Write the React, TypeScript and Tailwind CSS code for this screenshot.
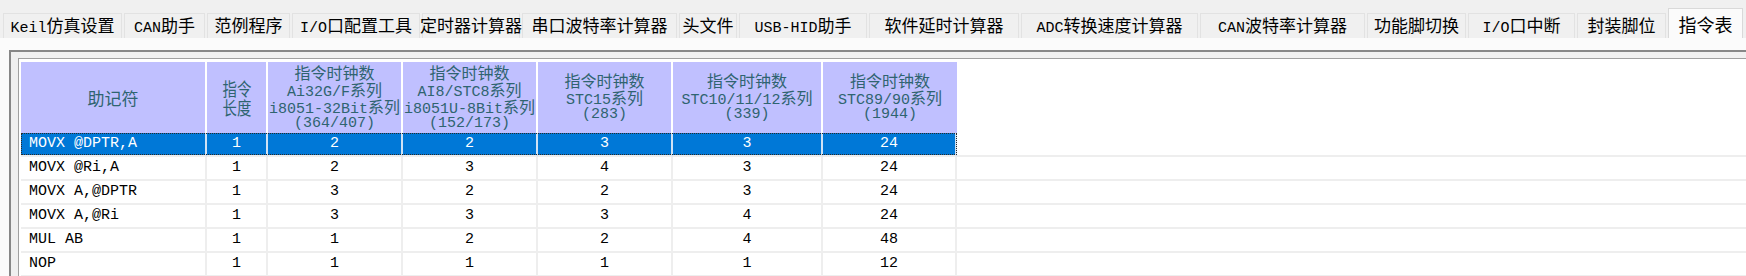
import React from "react";

const CJK = /([\u3000-\u9fff\uff00-\uffef]+)/;

function Mixed({ text, cjk }: { text: string; cjk: string }) {
  return (
    <span>
      {text.split(CJK).map((part, i) =>
        part === "" ? null : CJK.test(part) ? (
          <span key={i} className={cjk}>
            {part}
          </span>
        ) : (
          <span key={i}>{part}</span>
        )
      )}
    </span>
  );
}

// label + width taken from the reference tab strip
const tabs = [
  ["Keil仿真设置", "w-[119px]"],
  ["CAN助手", "w-[81px]"],
  ["范例程序", "w-[83px]"],
  ["I/O口配置工具", "w-[128px]"],
  ["定时器计算器", "w-[98px]"],
  ["串口波特率计算器", "w-[155px]"],
  ["头文件", "w-[58px]"],
  ["USB-HID助手", "w-[128px]"],
  ["软件延时计算器", "w-[150px]"],
  ["ADC转换速度计算器", "w-[177px]"],
  ["CAN波特率计算器", "w-[165px]"],
  ["功能脚切换", "w-[99px]"],
  ["I/O口中断", "w-[107px]"],
  ["封装脚位", "w-[89px]"],
  ["指令表", "w-[75px]"],
];

const colW = ["w-[186px]", "w-[61px]", "w-[135px]", "w-[135px]", "w-[135px]", "w-[150px]", "w-[134px]"];

const clockHeads = [
  ["指令时钟数", "Ai32G/F系列", "(i8051-32Bit系列)", "(364/407)"],
  ["指令时钟数", "AI8/STC8系列", "(i8051U-8Bit系列)", "(152/173)"],
  ["指令时钟数", "STC15系列", "(283)"],
  ["指令时钟数", "STC10/11/12系列", "(339)"],
  ["指令时钟数", "STC89/90系列", "(1944)"],
];

const rows: (string | number)[][] = [
  ["MOVX @DPTR,A", 1, 2, 2, 3, 3, 24],
  ["MOVX @Ri,A", 1, 2, 3, 4, 3, 24],
  ["MOVX A,@DPTR", 1, 3, 2, 2, 3, 24],
  ["MOVX A,@Ri", 1, 3, 3, 3, 4, 24],
  ["MUL AB", 1, 1, 2, 2, 4, 48],
  ["NOP", 1, 1, 1, 1, 1, 12],
];

const cjkFont = "font-['Noto_Sans_CJK_SC',sans-serif]";

export default function App() {
  return (
    <div className="w-[1746px] h-[276px] overflow-hidden bg-[#f0f0f0] font-['Liberation_Mono','Noto_Sans_CJK_SC',monospace] text-black flex flex-col">
      {/* tab strip */}
      <div className="h-[38px] flex items-end pl-[3px] gap-[2px] shrink-0">
        {tabs.map(([t, w], i) =>
          i === tabs.length - 1 ? (
            <div
              key={t}
              className={`${w} h-[30px] bg-[#fbfbfb] border border-b-0 border-[#d9d9d9] flex justify-center items-start pt-[5px] text-[15px] leading-[20px] whitespace-nowrap`}
            >
              <Mixed text={t} cjk={`text-[18px] leading-[20px] ${cjkFont}`} />
            </div>
          ) : (
            <div
              key={t}
              className={`${w} h-[25px] bg-[#f0f0f0] border border-b-0 border-[#e2e2e2] flex justify-center items-center pt-[2px] text-[15px] leading-[20px] whitespace-nowrap`}
            >
              <Mixed text={t} cjk={`text-[17px] leading-[20px] ${cjkFont}`} />
            </div>
          )
        )}
      </div>

      {/* page */}
      <div className="flex-1 bg-[#fbfbfb] pt-[12px] pl-[9px]">
        <div className="h-full border-t-2 border-l-2 border-[#878787] bg-[#f0f0f0] pt-[6px] pl-[7px]">
          <div className="h-full border-t border-l border-[#a0a0a0] bg-white pt-[3px] pl-[2px]">
            {/* header */}
            <div className="flex h-[71px]">
              <div className={`${colW[0]} bg-[#c0c0ff] border-r-2 border-white flex items-center justify-center text-[#2f6470]`}>
                <span className={`text-[17px] leading-[20px] ${cjkFont}`}>助记符</span>
              </div>
              <div className={`${colW[1]} bg-[#c0c0ff] border-r-2 border-white flex items-center justify-center text-[#2f6470]`}>
                <div className={`flex flex-col items-center scale-x-80 text-[18px] leading-[19px] ${cjkFont}`}>
                  <span>指令</span>
                  <span>长度</span>
                </div>
              </div>
              {clockHeads.map((lines, ci) => (
                <div
                  key={ci}
                  className={`${colW[ci + 2]} bg-[#c0c0ff] ${ci === clockHeads.length - 1 ? "" : "border-r-2 border-white"} flex flex-col justify-center overflow-hidden text-[#2f6470] text-[15px]`}
                >
                  {lines.map((l, li) => (
                    <div key={li} className="flex justify-center whitespace-nowrap leading-[17px] h-[17px]">
                      <Mixed text={l} cjk={`text-[16px] leading-[17px] ${cjkFont}`} />
                    </div>
                  ))}
                </div>
              ))}
            </div>

            {/* body */}
            {rows.map((r, ri) => {
              const sel = ri === 0;
              return (
                <div key={ri} className="flex h-[24px] relative text-[15px]">
                  {r.map((v, ci) => (
                    <div
                      key={ci}
                      className={`${colW[ci]} h-[24px] border-b-2 border-r-2 ${
                        sel ? "bg-[#0078d7] text-white border-r-[#cfe2f5] border-b-[#eeeeee]" : "border-[#eeeeee]"
                      } flex items-center whitespace-nowrap ${ci === 0 ? "pl-[8px]" : "justify-center"}`}
                    >
                      {v}
                    </div>
                  ))}
                  <div className="flex-1 h-[24px] border-b-2 border-[#eeeeee]" />
                  {sel && (
                    <div className="absolute left-0 top-0 w-[936px] h-[22px] border border-dotted border-[#2a2a2a] pointer-events-none" />
                  )}
                </div>
              );
            })}
          </div>
        </div>
      </div>
    </div>
  );
}
